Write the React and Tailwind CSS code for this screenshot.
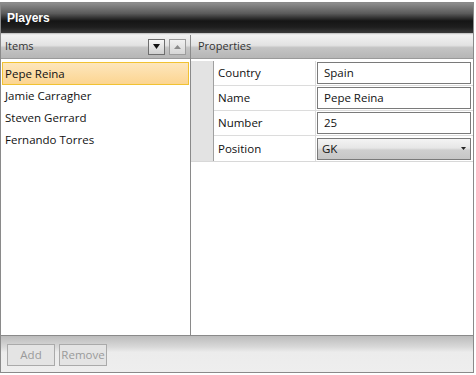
import React from 'react';

const players = ['Pepe Reina', 'Jamie Carragher', 'Steven Gerrard', 'Fernando Torres'];

const props = [
  { label: 'Country', value: 'Spain' },
  { label: 'Name', value: 'Pepe Reina' },
  { label: 'Number', value: '25' },
];

export default function App() {
  return (
    <div className="w-[476px] h-[375px] bg-white pt-[2px]" style={{ fontFamily: '"Open Sans", "Noto Sans", sans-serif' }}>
      <div className="w-[474px] h-[371px] border border-[#8a8a8a] flex flex-col bg-white">
        {/* TITLE */}
        <div className="h-[31px] shrink-0 flex items-center px-[6px] bg-[linear-gradient(to_bottom,#8e8e8e_0%,#5a5a5a_35%,#151515_60%,#1e1e1e_80%,#3a3a3a_100%)] border-b border-[#c8c8c8]">
          <span className="text-white font-bold text-[12px] leading-none" style={{ fontFamily: '"Liberation Sans", sans-serif' }}>Players</span>
        </div>

        <div className="flex flex-1 min-h-0 border-t border-[#e8e8e8]">
          {/* ITEMS */}
          <div className="w-[190px] shrink-0 flex flex-col border-r border-[#8a8a8a]">
            <div className="h-[24px] shrink-0 flex items-center justify-between pl-[4px] pr-[4px] bg-[linear-gradient(to_bottom,#f2f2f2_0%,#e2e2e2_45%,#c4c4c4_55%,#b6b6b6_100%)] border-b border-[#9a9a9a]">
              <span className="text-[11px] text-[#333]">Items</span>
              <div className="flex gap-[4px]">
                <div className="w-[17px] h-[16px] border border-[#6e6e6e] bg-[linear-gradient(to_bottom,#f6f6f6,#cfcfcf)] flex items-center justify-center">
                  <svg width="7" height="5" viewBox="0 0 7 5"><path d="M0 0h7L3.5 5z" fill="#111" /></svg>
                </div>
                <div className="w-[17px] h-[16px] border border-[#9c9c9c] bg-[linear-gradient(to_bottom,#f0f0f0,#d6d6d6)] flex items-center justify-center">
                  <svg width="7" height="4" viewBox="0 0 7 4"><path d="M0 4h7L3.5 0z" fill="#8a8a8a" /></svg>
                </div>
              </div>
            </div>
            <div className="flex-1 bg-white pt-[3px] px-[1px]">
              {players.map((p, i) => (
                <div
                  key={p}
                  className={`flex items-center text-[11.5px] text-[#111] ${i === 0 ? 'h-[23px] border border-[#f1c232] bg-[linear-gradient(to_bottom,#fde6bd,#fcd591)] pl-[2px]' : 'h-[22px] pl-[3px]'}`}
                >
                  {p}
                </div>
              ))}
            </div>
          </div>

          {/* PROPERTIES */}
          <div className="flex-1 flex flex-col">
            <div className="h-[24px] shrink-0 flex items-center pl-[7px] bg-[linear-gradient(to_bottom,#f2f2f2_0%,#e2e2e2_45%,#c4c4c4_55%,#b6b6b6_100%)] border-b border-[#9a9a9a]">
              <span className="text-[11px] text-[#333]">Properties</span>
            </div>
            <div className="flex-1 bg-white pt-[2px]">
              <div className="flex border-b border-[#d8d8d8]">
                <div className="w-[23px] bg-[#e3e3e3] border-r border-[#a0a0a0]" />
                <div className="flex-1">
                  {props.map((r) => (
                    <div key={r.label} className="h-[25px] flex border-b border-[#dcdcdc]">
                      <div className="w-[102px] border-r border-[#dcdcdc] flex items-center pl-[4px] text-[11.5px] text-[#111]">{r.label}</div>
                      <div className="flex-1 flex items-center pl-[1px] pr-[2px]">
                        <div className="w-full h-[22px] border border-[#7a7a7a] flex items-center pl-[6px] text-[11.5px] text-[#111] bg-white">{r.value}</div>
                      </div>
                    </div>
                  ))}
                  <div className="h-[25px] flex">
                    <div className="w-[102px] border-r border-[#dcdcdc] flex items-center pl-[4px] text-[11.5px] text-[#111]">Position</div>
                    <div className="flex-1 flex items-center pl-[1px] pr-[2px]">
                      <div className="w-full h-[22px] border border-[#7a7a7a] flex items-center justify-between pl-[4px] pr-[4px] text-[11.5px] text-[#111] bg-[linear-gradient(to_bottom,#f4f4f4_0%,#e6e6e6_45%,#cfcfcf_55%,#c6c6c6_100%)]">
                        <span>GK</span>
                        <svg width="5" height="3" viewBox="0 0 5 3"><path d="M0 0h5L2.5 3z" fill="#222" /></svg>
                      </div>
                    </div>
                  </div>
                </div>
              </div>
            </div>
          </div>
        </div>

        {/* FOOTER */}
        <div className="h-[37px] shrink-0 border-t border-[#8a8a8a] flex items-center gap-[4px] pl-[6px] pt-[2px] bg-[linear-gradient(to_bottom,#bcbcbc_0%,#d8d8d8_30%,#ececec_45%,#eeeeee_100%)]">
          <div className="w-[48px] h-[22px] border border-[#aaaaaa] bg-[#e4e4e4] flex items-center justify-center text-[11.5px] text-[#9a9a9a]">Add</div>
          <div className="w-[48px] h-[22px] border border-[#aaaaaa] bg-[#e4e4e4] flex items-center justify-center text-[11.5px] text-[#9a9a9a]">Remove</div>
        </div>
      </div>
    </div>
  );
}
